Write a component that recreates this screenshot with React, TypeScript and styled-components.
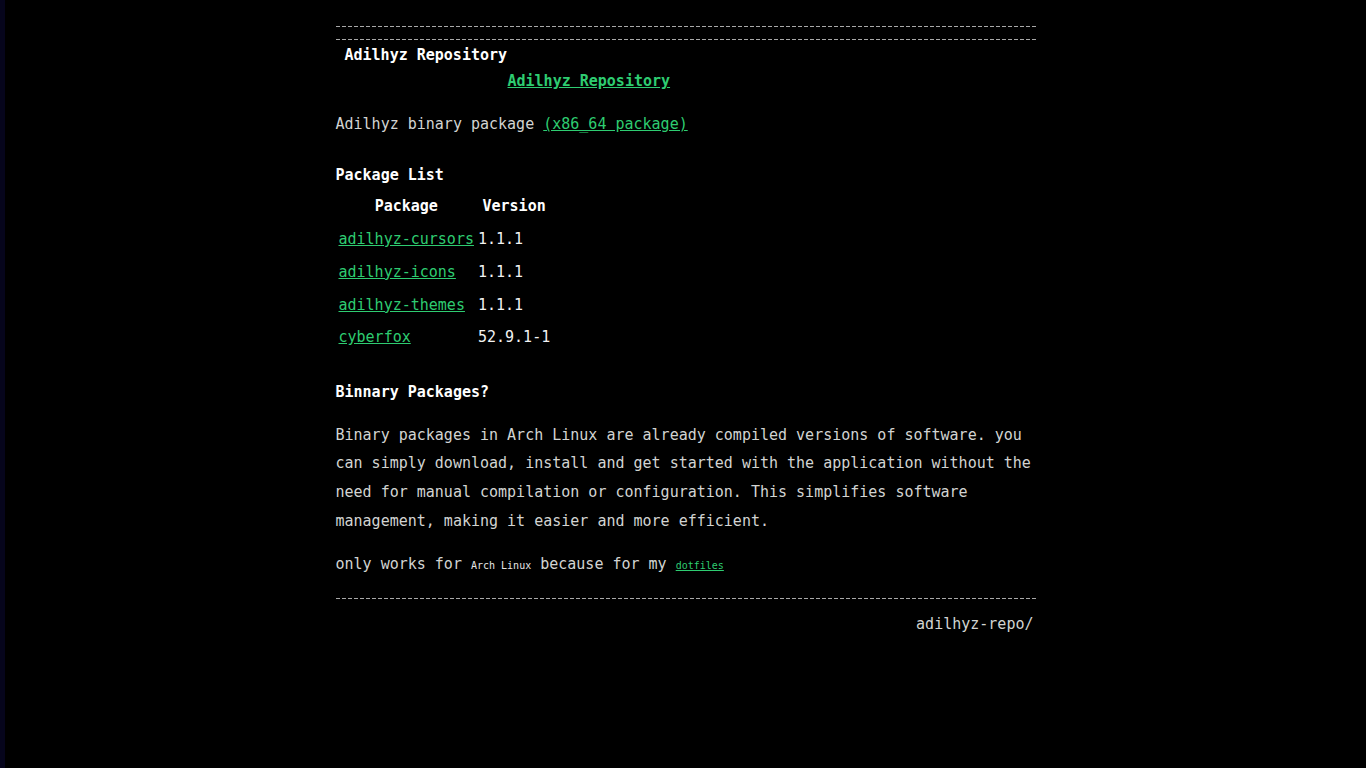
import React from "react";
import styled, { createGlobalStyle } from "styled-components";

const GlobalStyle = createGlobalStyle`
  html { background: #000; }
  body {
    margin: 0;
    min-height: 100vh;
    background: #000;
    border-left: 5px solid #06051c;
    box-sizing: border-box;
    color: #d2d4d2;
    font-family: "DejaVu Sans Mono", "Liberation Mono", monospace;
    font-size: 15px;
    line-height: 28.7px;
  }
`;

const Container = styled.main`
  width: 700px;
  margin: 0 auto;
  padding-top: 26px;
  padding-bottom: 40px;
`;

const Rule = styled.div<{ $gap?: number }>`
  height: 1px;
  margin-top: ${(p) => p.$gap ?? 0}px;
  background: repeating-linear-gradient(90deg, #a8a8a8 0 4px, transparent 4px 6px);
`;

const Title = styled.div`
  margin-top: 2px;
  padding-left: 9px;
  line-height: 26px;
  font-weight: bold;
  color: #fff;
`;

const TitleLink = styled.a`
  display: block;
  padding-left: 172px;
  line-height: 26px;
  font-weight: bold;
  color: #2ecc71;
  text-decoration: underline;
`;

const Link = styled.a<{ $small?: boolean }>`
  color: #2ecc71;
  text-decoration: underline;
  font-size: ${(p) => (p.$small ? "10px" : "inherit")};
`;

const Para = styled.p<{ $gap: number }>`
  margin: ${(p) => p.$gap}px 0 0;
`;

const Heading = styled.h3<{ $gap: number }>`
  margin: ${(p) => p.$gap}px 0 0;
  font-size: 15px;
  font-weight: bold;
  color: #fff;
`;

const Table = styled.table`
  margin-top: 0;
  border-spacing: 2px;
  font-size: 15px;
  line-height: 28.7px;
`;

const Th = styled.th`
  padding: 1px;
  color: #fff;
  font-weight: bold;
  text-align: center;
`;

const Td = styled.td`
  padding: 1px;
  color: #f2f2f2;
`;

const Small = styled.span`
  font-size: 10px;
  color: #e6e6e6;
`;

const Footer = styled.div`
  margin-top: 11px;
  padding-right: 2px;
  text-align: right;
`;

const packages = [
  { name: "adilhyz-cursors", version: "1.1.1" },
  { name: "adilhyz-icons", version: "1.1.1" },
  { name: "adilhyz-themes", version: "1.1.1" },
  { name: "cyberfox", version: "52.9.1-1" },
];

export default function App() {
  return (
    <>
      <GlobalStyle />
      <Container>
        <Rule />
        <Rule $gap={12} />
        <Title>Adilhyz Repository</Title>
        <TitleLink href="#">Adilhyz Repository</TitleLink>
        <Para $gap={16}>
          Adilhyz binary package <Link href="#">(x86_64 package)</Link>
        </Para>
        <Heading $gap={22}>Package List</Heading>
        <Table>
          <thead>
            <tr>
              <Th>Package</Th>
              <Th>Version</Th>
            </tr>
          </thead>
          <tbody>
            {packages.map((p) => (
              <tr key={p.name}>
                <Td>
                  <Link href="#">{p.name}</Link>
                </Td>
                <Td>{p.version}</Td>
              </tr>
            ))}
          </tbody>
        </Table>
        <Heading $gap={23}>Binnary Packages?</Heading>
        <Para $gap={14}>
          Binary packages in Arch Linux are already compiled versions of software. you can simply
          download, install and get started with the application without the need for manual
          compilation or configuration. This simplifies software management, making it easier and
          more efficient.
        </Para>
        <Para $gap={15}>
          only works for <Small>Arch Linux</Small> because for my{" "}
          <Link href="#" $small>
            dotfiles
          </Link>
        </Para>
        <Rule $gap={16.6} />
        <Footer>adilhyz-repo/</Footer>
      </Container>
    </>
  );
}
